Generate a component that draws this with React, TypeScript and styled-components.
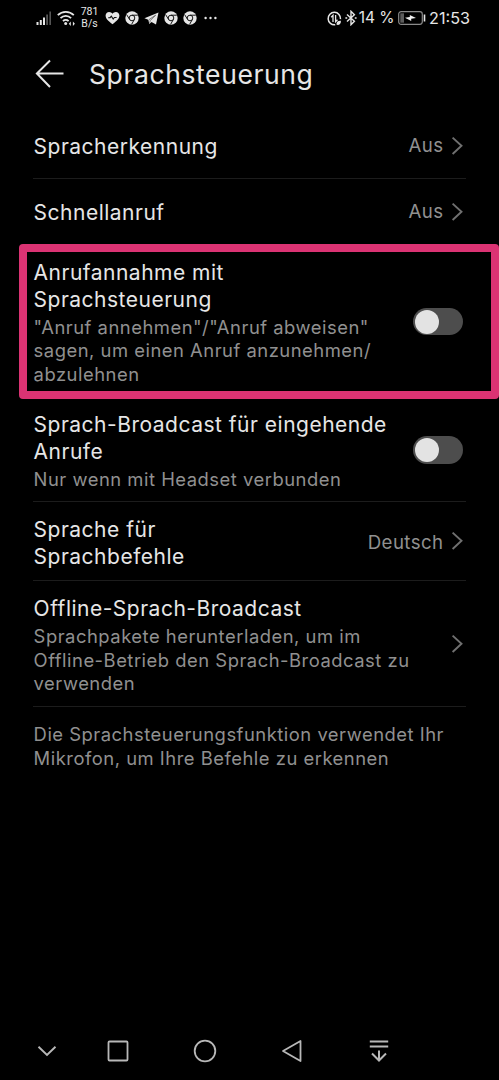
import React from "react";
import styled, { createGlobalStyle } from "styled-components";

const Global = createGlobalStyle`
  * { box-sizing: border-box; }
  html, body { margin: 0; background: #000; }
  body { font-family: Inter, "Liberation Sans", sans-serif; color: #e6e6e6; }
  svg { display: block; flex: none; }
`;

const Screen = styled.div`
  width: 499px;
  height: 1080px;
  background: #000;
  display: flex;
  flex-direction: column;
  overflow: hidden;
`;

const StatusBar = styled.div`
  height: 36px;
  padding: 0 29px 0 36px;
  display: flex;
  justify-content: space-between;
  align-items: center;
`;

const StatusGroup = styled.div`
  display: flex;
  align-items: center;
  height: 36px;
`;

const Glyph = styled.span<{ $left?: number }>`
  display: block;
  margin-left: ${(p) => p.$left ?? 0}px;
`;

const Speed = styled.div`
  width: 19px;
  margin-left: 5px;
  font: 400 10.5px/12px Roboto, sans-serif;
  text-align: center;
  white-space: nowrap;
`;

const StatusText = styled.span<{ $left: number; $size: number }>`
  margin-left: ${(p) => p.$left}px;
  font-size: ${(p) => p.$size}px;
  line-height: 20px;
  white-space: nowrap;
`;

const Header = styled.header`
  height: 78px;
  padding: 0 35px 2px;
  display: flex;
  align-items: center;
  gap: 24px;
`;

const Title = styled.h1`
  margin: 0;
  font-size: 26.5px;
  line-height: 34px;
  font-weight: 400;
  letter-spacing: 0.6px;
`;

const List = styled.main`
  padding: 0 33px;
  display: flex;
  flex-direction: column;
  flex: 1;
`;

const Row = styled.section<{ $height: number; $divider?: boolean }>`
  position: relative;
  height: ${(p) => p.$height}px;
  flex: none;
  display: flex;
  align-items: center;
  justify-content: space-between;
  border-bottom: 1px solid ${(p) => (p.$divider ? "#1c1c1c" : "transparent")};
`;

const RowText = styled.div<{ $drop?: number }>`
  padding: ${(p) => p.$drop ?? 0}px 0 0 0.6px;
`;

const Label = styled.div`
  font-size: 21px;
  line-height: 27px;
  letter-spacing: 0.5px;
  white-space: nowrap;
`;

const Description = styled.div`
  margin-top: 3px;
  font-size: 18.4px;
  line-height: 23.6px;
  letter-spacing: 0.51px;
  color: #909090;
  white-space: nowrap;
`;

const Footnote = styled(Description)`
  margin-top: 16.4px;
  padding-left: 0.6px;
`;

const Value = styled.div`
  display: flex;
  align-items: center;
  gap: 7.5px;
  padding-right: 3px;
  font-size: 18.7px;
  line-height: 24px;
  letter-spacing: 0.4px;
  color: #909090;
`;

const ValueText = styled.span<{ $drop?: number }>`
  padding-top: ${(p) => p.$drop ?? 0}px;
`;

const Toggle = styled.div`
  width: 50.5px;
  height: 27.5px;
  margin: 0 3px 1px 0;
  padding: 1.75px 2px;
  border-radius: 14px;
  background: #4d4d4d;
`;

const Knob = styled.div`
  width: 24px;
  height: 24px;
  border-radius: 50%;
  background: #e3e3e3;
`;

const Highlight = styled.div`
  position: absolute;
  top: -1.5px;
  left: -14.3px;
  width: 480.3px;
  height: 155px;
  border: 8px solid #db3373;
  border-radius: 4px;
  pointer-events: none;
`;

const NavBar = styled.nav`
  height: 58px;
  padding-left: 19px;
  display: grid;
  grid-template-columns: 56px repeat(4, 86.8px);
  justify-items: center;
  align-items: center;
`;

const Chevron = () => (
  <svg width="12" height="20" viewBox="0 0 12 20" fill="none" stroke="#707070" strokeWidth="1.9">
    <path d="M1.6 1.6 10.500 9.800l-8.900 8.200" />
  </svg>
);

const Switch = () => (
  <Toggle role="switch" aria-checked="false">
    <Knob />
  </Toggle>
);

const Browser = () => (
  <svg width="14" height="14" viewBox="0 0 14 14">
    <circle cx="7" cy="7" r="6.7" fill="#e6e6e6" />
    <g fill="none" stroke="#161616" strokeWidth="1">
      <circle cx="7" cy="7" r="2.8" />
      <path d="M7 4.2h5.8M4.6 8.4 1.6 3.6M9.4 8.4l-2.8 5" />
    </g>
  </svg>
);

const Signal = () => (
  <svg width="16" height="16" viewBox="0 0 16 16" fill="#e6e6e6">
    <path d="M.5 12h2v3h-2zM3.800 10h2v5h-2zM7 7.500h2V15H7z" />
    <path d="M10.200 4.500h1.800V15h-1.800zM13.400 1.500h1.600V15h-1.600z" fill="#555" />
  </svg>
);

const Wifi = () => (
  <svg width="18" height="16" viewBox="0 0 18 16" fill="none" stroke="#e6e6e6" strokeWidth="1.8">
    <path d="M.8 5.200c4.500-4.500 11.500-4.500 16 0M3.500 8.200c3-3 7.500-3 10.600 0M6 11.100c1.600-1.600 4-1.600 5.600 0" />
    <circle cx="8.700" cy="13.600" r="1.500" fill="#e6e6e6" stroke="none" />
    <path d="M11.800 13.700l2-2.200v4.400zM17.900 13.700l-2-2.200v4.400z" fill="#e6e6e6" stroke="none" />
  </svg>
);

const Heart = () => (
  <svg width="15" height="14" viewBox="0 0 15 14">
    <path d="M7.500 13.200C3 9.800.6 7.600.6 4.600.6 2.300 2.200.9 4.100.9c1.400 0 2.600.7 3.400 1.900C8.300 1.600 9.500.9 10.900.9c1.900 0 3.500 1.400 3.500 3.700 0 3-2.400 5.200-6.900 8.600z" fill="#e6e6e6" />
    <path d="M3.200 6.700h1.900l1.200-1.600 1.900 2.900 1.200-1.500h2.200" fill="none" stroke="#111" strokeWidth="1.100" />
  </svg>
);

const PaperPlane = () => (
  <svg width="15" height="13" viewBox="0 0 15 13">
    <path d="M14.500.5.4 6.200l3.900 1.500 1 4.300 2.200-1.900 4.500 2.500z" fill="#e6e6e6" />
    <path d="M4.900 7.700 11.600 3.200 6.300 8.500l-.6 2.300" fill="none" stroke="#333" strokeWidth=".6" />
  </svg>
);

const Dots = () => (
  <svg width="13" height="4" viewBox="0 0 13 4" fill="#e6e6e6">
    <circle cx="1.600" cy="2" r="1.200" />
    <circle cx="6.500" cy="2" r="1.200" />
    <circle cx="11.400" cy="2" r="1.200" />
  </svg>
);

const DataSaver = () => (
  <svg width="15" height="15" viewBox="0 0 15 15" fill="none" stroke="#e6e6e6">
    <path d="M13.500 8.200a6.200 6.200 0 1 0-5.300 5.500" strokeWidth="1.500" />
    <path d="M6 11V4.300L4.200 6.200M8.600 4v6.700l1.900-1.900" strokeWidth="1.300" />
    <path d="M9.600 13.800c-.5-2.600 1-4.200 4.300-4.100.2 3-1.300 4.600-4.300 4.100z" fill="#e6e6e6" stroke="none" />
  </svg>
);

const Bluetooth = () => (
  <svg width="12" height="16" viewBox="0 0 12 16" fill="none" stroke="#e6e6e6" strokeWidth="1.400">
    <path d="M2 4.500l7.400 6.800L6 14.700V1.300l3.400 3.400L2 11.500" />
    <path d="M.4 8h1.800M9.800 8h1.800" strokeWidth="1.600" />
  </svg>
);

const Battery = () => (
  <svg width="28" height="14" viewBox="0 0 28 14">
    <rect x=".7" y=".7" width="23.600" height="12.600" rx="2.500" fill="none" stroke="#8a8a8a" strokeWidth="1.200" />
    <rect x="2.300" y="2.300" width="3.700" height="9.400" fill="#5c5c5c" />
    <path d="M25.700 3.500h1.600v7h-1.600z" fill="#e6e6e6" />
    <path d="M7 6.700l4.800-.6V3.900l6.200 3.200-4.800.6v2.400z" fill="#f2f2f2" />
  </svg>
);

export default function App() {
  return (
    <Screen>
      <Global />
      <StatusBar>
        <StatusGroup>
          <Glyph><Signal /></Glyph>
          <Glyph $left={5}><Wifi /></Glyph>
          <Speed>781<br />B/s</Speed>
          <Glyph $left={6}><Heart /></Glyph>
          <Glyph $left={5}><Browser /></Glyph>
          <Glyph $left={5}><PaperPlane /></Glyph>
          <Glyph $left={5}><Browser /></Glyph>
          <Glyph $left={5}><Browser /></Glyph>
          <Glyph $left={7}><Dots /></Glyph>
        </StatusGroup>
        <StatusGroup>
          <Glyph><DataSaver /></Glyph>
          <Glyph $left={3}><Bluetooth /></Glyph>
          <StatusText $left={2} $size={15.5}>14 %</StatusText>
          <Glyph $left={3}><Battery /></Glyph>
          <StatusText $left={3.5} $size={16.2}>21:53</StatusText>
        </StatusGroup>
      </StatusBar>

      <Header>
        <svg width="30" height="30" viewBox="0 0 30 30" fill="none" stroke="#e6e6e6" strokeWidth="2">
          <path d="M15 1.500 1.900 14.500 15 28M1.900 14.500h26.600" />
        </svg>
        <Title>Sprachsteuerung</Title>
      </Header>

      <List>
        <Row $height={65} $divider>
          <RowText>
            <Label>Spracherkennung</Label>
          </RowText>
          <Value><ValueText>Aus</ValueText><Chevron /></Value>
        </Row>
        <Row $height={66}>
          <RowText $drop={2}>
            <Label>Schnellanruf</Label>
          </RowText>
          <Value><ValueText $drop={1}>Aus</ValueText><Chevron /></Value>
        </Row>
        <Row $height={155}>
          <RowText $drop={1}>
            <Label>Anrufannahme mit<br />Sprachsteuerung</Label>
            <Description>
              "Anruf annehmen"/"Anruf abweisen"<br />
              sagen, um einen Anruf anzunehmen/<br />
              abzulehnen
            </Description>
          </RowText>
          <Switch />
          <Highlight />
        </Row>
        <Row $height={102} $divider>
          <RowText $drop={2}>
            <Label>Sprach-Broadcast für eingehende<br />Anrufe</Label>
            <Description>Nur wenn mit Headset verbunden</Description>
          </RowText>
          <Switch />
        </Row>
        <Row $height={79} $divider>
          <RowText $drop={4}>
            <Label>Sprache für<br />Sprachbefehle</Label>
          </RowText>
          <Value><ValueText $drop={3}>Deutsch</ValueText><Chevron /></Value>
        </Row>
        <Row $height={126} $divider>
          <RowText $drop={4}>
            <Label>Offline-Sprach-Broadcast</Label>
            <Description>
              Sprachpakete herunterladen, um im<br />
              Offline-Betrieb den Sprach-Broadcast zu<br />
              verwenden
            </Description>
          </RowText>
          <Value><Chevron /></Value>
        </Row>
        <Footnote>
          Die Sprachsteuerungsfunktion verwendet Ihr<br />
          Mikrofon, um Ihre Befehle zu erkennen
        </Footnote>
      </List>

      <NavBar>
        <svg width="20" height="12" viewBox="0 0 20 12" fill="none" stroke="#b8b8b8" strokeWidth="1.900">
          <path d="M1.500 1.700 10 10l8.500-8.300" />
        </svg>
        <svg width="22" height="22" viewBox="0 0 22 22" fill="none" stroke="#b8b8b8" strokeWidth="1.800">
          <rect x="1.500" y="1.500" width="19" height="19" rx="1" />
        </svg>
        <svg width="24" height="24" viewBox="0 0 24 24" fill="none" stroke="#b8b8b8" strokeWidth="1.800">
          <circle cx="12" cy="12" r="10.300" />
        </svg>
        <svg width="22" height="24" viewBox="0 0 22 24" fill="none" stroke="#b8b8b8" strokeWidth="1.800" strokeLinejoin="round">
          <path d="M19.500 2v20L2 12z" />
        </svg>
        <svg width="20" height="24" viewBox="0 0 20 24" fill="none" stroke="#b8b8b8" strokeWidth="2">
          <path d="M.8 2.500h18.400M.8 7.500h18.400M10 11.500v9.800M3 14.500l7 7 7-7" />
        </svg>
      </NavBar>
    </Screen>
  );
}
